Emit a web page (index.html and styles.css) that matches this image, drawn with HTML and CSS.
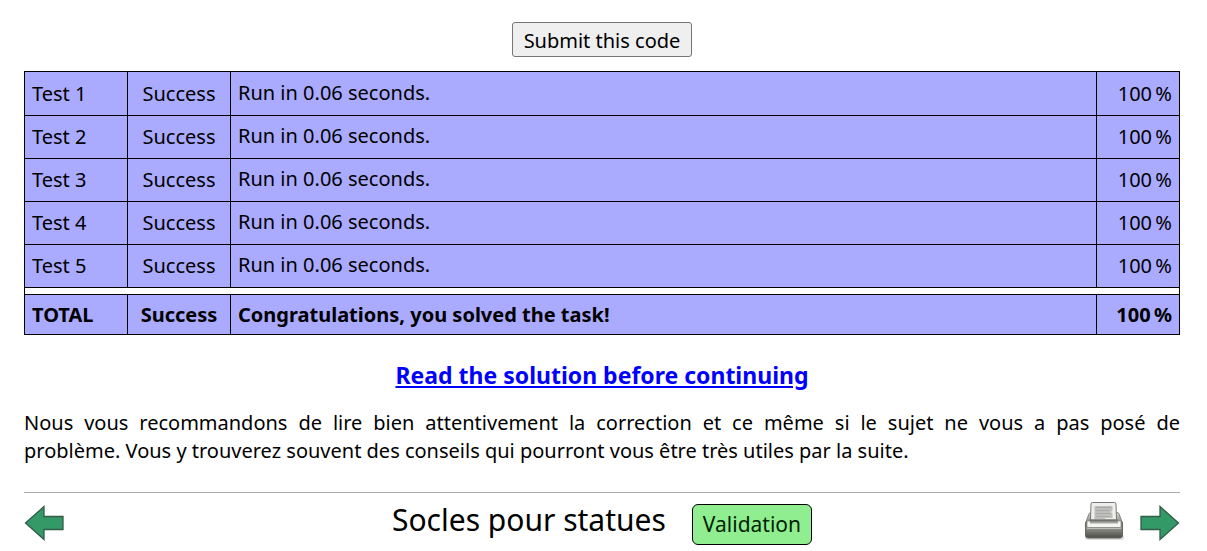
FILE: index.html
```html
<!DOCTYPE html>
<html lang="en">
<head>
<meta charset="utf-8">
<title>Socles pour statues</title>
<link rel="stylesheet" href="styles.css">
</head>
<body>
<main>
  <form class="submit"><button type="button">Submit this code</button></form>
  <table class="results">
    <colgroup><col class="col-name"><col class="col-status"><col><col class="col-score"></colgroup>
    <tbody>
      <tr class="first"><td>Test 1</td><td class="status">Success</td><td class="message">Run in 0.06 seconds.</td><td class="score">100&#8239;%</td></tr>
      <tr><td>Test 2</td><td class="status">Success</td><td class="message">Run in 0.06 seconds.</td><td class="score">100&#8239;%</td></tr>
      <tr><td>Test 3</td><td class="status">Success</td><td class="message">Run in 0.06 seconds.</td><td class="score">100&#8239;%</td></tr>
      <tr><td>Test 4</td><td class="status">Success</td><td class="message">Run in 0.06 seconds.</td><td class="score">100&#8239;%</td></tr>
      <tr><td>Test 5</td><td class="status">Success</td><td class="message">Run in 0.06 seconds.</td><td class="score">100&#8239;%</td></tr>
      <tr class="spacer"><td colspan="4"></td></tr>
    </tbody>
    <tfoot>
      <tr class="total"><td>TOTAL</td><td class="status">Success</td><td>Congratulations, you solved the task!</td><td class="score">100&#8239;%</td></tr>
    </tfoot>
  </table>
  <p class="solution"><a href="#solution">Read the solution before continuing</a></p>
  <p class="advice" lang="fr">Nous vous recommandons de lire bien attentivement la correction et ce même si le sujet ne vous a pas posé de problème.&nbsp;Vous y trouverez souvent des conseils qui pourront vous être très utiles par la suite.</p>
</main>
<footer class="bar">
  <a class="icon" href="#previous" aria-label="Previous">
    <svg width="40" height="36" viewBox="0 0 40 36"><path d="M1.500 18 20 1.500V11.500H39V24.500H20V34.500Z" fill="#339966" stroke="#315d49" stroke-width="1.300"/></svg>
  </a>
  <div class="heading">
    <h1 lang="fr">Socles pour statues</h1>
    <span class="badge">Validation</span>
  </div>
  <div class="actions">
    <a class="icon print" href="#print" aria-label="Print">
      <svg width="40" height="40" viewBox="0 0 40 40">
        <defs>
          <linearGradient id="tray" x1="0" y1="0" x2="0" y2="1"><stop offset="0" stop-color="#d8d8d4"/><stop offset="1" stop-color="#85857f"/></linearGradient>
          <linearGradient id="base" x1="0" y1="0" x2="0" y2="1"><stop offset="0" stop-color="#b4b4ae"/><stop offset=".5" stop-color="#85857f"/><stop offset="1" stop-color="#4a4a46"/></linearGradient>
        </defs>
        <rect x="1" y="34" width="39" height="5" rx="2" fill="#ddd"/>
        <path d="M5 13Q5.500 11.500 7 11.500H33Q34.500 11.500 35 13L38.500 22H1.500Z" fill="url(#tray)" stroke="#85857f"/>
        <path d="M7 3Q7 1.500 8.500 1.500H30.500Q32 1.500 32 3L32.500 19H6.500Z" fill="#eeeeec" stroke="#777"/>
        <path d="M10.500 5H28.500V10L26 11L28.500 12V17H21V18.500H10.500Z" fill="#bebebc"/>
        <path d="M12 6.500H27M12 9.500H25M12 12.500H27M12 15.500H25" stroke="#acacaa"/>
        <path d="M5.500 18.500H33.500V21H5.500Z" fill="#73736e"/>
        <path d="M1.500 22V34Q1.500 37 4 37H36Q38.500 37 38.500 34V22L37 20.500V26H3V20.500Z" fill="url(#base)" stroke="#666660"/>
        <path d="M3 20.500H37V26.500H3Z" fill="#a6a6a0"/>
        <path d="M3.500 20.500H6V22.500H34V20.500H36.500V26H3.500Z" fill="#f4f4f2"/>
        <path d="M3 27.500H37" stroke="#bdbdb7"/>
      </svg>
    </a>
    <a class="icon" href="#next" aria-label="Next">
      <svg width="40" height="36" viewBox="0 0 40 36"><path d="M38.500 18 20 1.500V11.500H1V24.500H20V34.500Z" fill="#339966" stroke="#315d49" stroke-width="1.300"/></svg>
    </a>
  </div>
</footer>
</body>
</html>
```
FILE: styles.css
```css
body {
  margin: 22px 27px 0 24px;
  background: #fff;
  color: #000;
  font-family: "Noto Sans", sans-serif;
  font-size: 20px;
  line-height: 28px;
}

.submit {
  display: flex;
  justify-content: center;
}

.submit button {
  padding: 4px 11px 2px;
  border: 1px solid #767676;
  border-radius: 3px;
  background: #efefef;
  color: #000;
  font: inherit;
  line-height: 27px;
}

.results {
  width: 100%;
  margin-top: 14px;
  border: 1px solid #000;
  border-collapse: collapse;
  table-layout: fixed;
}

.col-name,
.col-status {
  width: 103px;
}

.col-score {
  width: 83px;
}

.results td {
  height: 42px;
  padding: 0 7px;
  border: 1px solid #000;
  background: #aaf;
}

.results .first td {
  height: 43px;
}

.results .message {
  padding-bottom: 2px;
}

.results td.message {
  height: 40px;
}

.results .status {
  text-align: center;
}

.results .score {
  text-align: right;
}

.results .spacer td {
  height: 6px;
  padding: 0;
  background: #fff;
}

.results .total td {
  height: 39px;
  font-weight: bold;
}

.solution {
  margin: 26px 0 20px;
  font-size: 23px;
  font-weight: bold;
  text-align: center;
}

.solution a {
  color: #00f;
}

.advice {
  margin: 0;
  text-align: justify;
}

.bar {
  display: grid;
  grid-template-columns: 1fr auto 1fr;
  align-items: center;
  margin-top: 27px;
  padding-top: 8px;
  border-top: 1px solid #aaa;
}

.icon {
  display: block;
}

.icon svg {
  display: block;
}

.print {
  margin-bottom: 4px;
}

.actions {
  display: flex;
  align-items: center;
  justify-content: flex-end;
  gap: 16px;
}

.heading {
  display: flex;
  align-items: center;
  gap: 26px;
}

.heading h1 {
  margin: 0 0 6px;
  font-size: 30px;
  font-weight: normal;
  line-height: 36px;
}

.badge {
  margin-top: 3px;
  padding: 5px 10px 6px;
  border: 1px solid #000;
  border-radius: 6px;
  background: #90ee90;
  color: #020;
  font-size: 21px;
}
```
